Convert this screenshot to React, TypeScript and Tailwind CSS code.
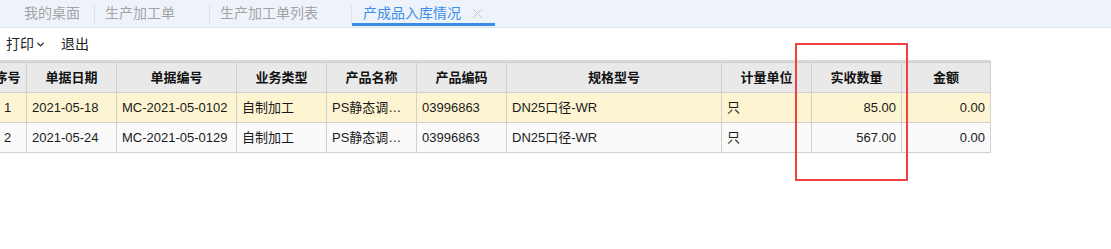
import { ChevronDown, X } from "lucide-react";

const font = { fontFamily: '"Liberation Sans", Arial, "Noto Sans CJK SC", sans-serif' };

type Row = {
  no: string;
  date: string;
  code: string;
  type: string;
  name: string;
  pcode: string;
  spec: string;
  unit: string;
  qty: string;
  amount: string;
};

const rows: Row[] = [
  { no: "1", date: "2021-05-18", code: "MC-2021-05-0102", type: "自制加工", name: "PS静态调…", pcode: "03996863", spec: "DN25口径-WR", unit: "只", qty: "85.00", amount: "0.00" },
  { no: "2", date: "2021-05-24", code: "MC-2021-05-0129", type: "自制加工", name: "PS静态调…", pcode: "03996863", spec: "DN25口径-WR", unit: "只", qty: "567.00", amount: "0.00" },
];

const cols = [
  { key: "no", title: "序号", w: "w-[38px]", align: "text-center" },
  { key: "date", title: "单据日期", w: "w-[90px]", align: "text-left" },
  { key: "code", title: "单据编号", w: "w-[120px]", align: "text-left" },
  { key: "type", title: "业务类型", w: "w-[90px]", align: "text-left" },
  { key: "name", title: "产品名称", w: "w-[90px]", align: "text-left" },
  { key: "pcode", title: "产品编码", w: "w-[90px]", align: "text-left" },
  { key: "spec", title: "规格型号", w: "w-[215px]", align: "text-left" },
  { key: "unit", title: "计量单位", w: "w-[90px]", align: "text-left" },
  { key: "qty", title: "实收数量", w: "w-[90px]", align: "text-right" },
  { key: "amount", title: "金额", w: "w-[89px]", align: "text-right" },
] as const;

const tabs = [
  { title: "我的桌面", w: "w-[81px]" },
  { title: "生产加工单", w: "w-[115px]" },
  { title: "生产加工单列表", w: "w-[142px]" },
];

export default function App() {
  return (
    <div className="relative w-[1111px] h-[249px] bg-white overflow-hidden text-[13px]" style={font}>
      <div className="flex h-[28px] items-stretch bg-[#eef3fb] border-b border-[#dfe6f0] pl-[14px] text-[14px]">
        {tabs.map((t) => (
          <div key={t.title} className={`flex items-center justify-between pl-[10px] ${t.w}`}>
            <span className="text-[#a3a3a3] whitespace-nowrap">{t.title}</span>
            <span className="h-[18px] w-px bg-[#dcdfe4]" />
          </div>
        ))}
        <div className="relative flex items-center w-[143px] pl-[11px]">
          <span className="text-[#3a8ee6] whitespace-nowrap">产成品入库情况</span>
          <X className="ml-[9px] h-[15px] w-[15px] text-[#c4c8cf]" strokeWidth={1.6} />
          <span className="absolute left-0 right-0 bottom-[1px] h-[3px] bg-[#3a8ee6]" />
        </div>
      </div>

      <div className="flex items-center h-[32px] pl-[6px] text-[14px] text-[#222]">
        <span>打印</span>
        <ChevronDown className="ml-[1px] h-[11px] w-[11px]" strokeWidth={3} />
        <span className="ml-[15px]">退出</span>
      </div>

      <div className="overflow-hidden w-[991px] border-t-2 border-[#d9d9d9]">
        <table className="-ml-[12px] border-collapse table-fixed text-[#1a1a1a]">
          <thead>
            <tr className="h-[30px] bg-[#e9e9e9]">
              {cols.map((c) => (
                <th key={c.key} className={`${c.w} border border-[#d0d0d0] font-bold text-center text-[#111] px-[4px] whitespace-nowrap`}>
                  {c.title}
                </th>
              ))}
            </tr>
          </thead>
          <tbody>
            {rows.map((r, i) => (
              <tr key={r.no} className={`h-[30px] ${i === 0 ? "bg-[#fdf5d2]" : "bg-[#fafafa]"}`}>
                {cols.map((c) => (
                  <td key={c.key} className={`border border-[#d0d0d0] px-[5px] whitespace-nowrap ${c.align}`}>
                    {r[c.key]}
                  </td>
                ))}
              </tr>
            ))}
          </tbody>
        </table>
      </div>

      <div className="absolute left-[795px] top-[43px] w-[113px] h-[138px] border-2 border-[#f04040]" />
    </div>
  );
}
